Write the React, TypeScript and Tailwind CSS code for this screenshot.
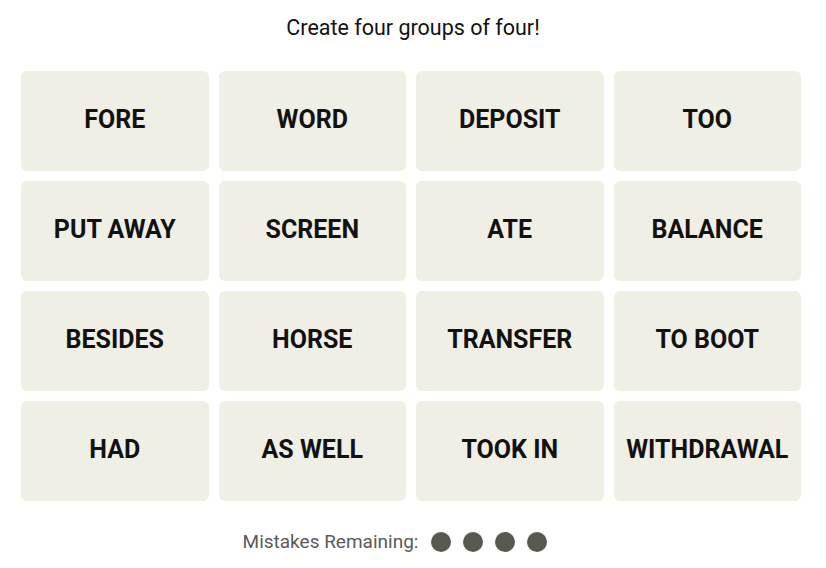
const words = [
  'FORE', 'WORD', 'DEPOSIT', 'TOO',
  'PUT AWAY', 'SCREEN', 'ATE', 'BALANCE',
  'BESIDES', 'HORSE', 'TRANSFER', 'TO BOOT',
  'HAD', 'AS WELL', 'TOOK IN', 'WITHDRAWAL',
];

export default function App() {
  return (
    <div className="w-[826px] h-[568px] bg-white font-['Roboto',sans-serif] text-[#121212]">
      <div className="pt-[15px] h-[71px] text-center text-[21.5px] leading-[26px]">
        Create four groups of four!
      </div>
      <div className="mx-[21px] w-[780px] grid grid-cols-4 gap-[10px]">
        {words.map((w) => (
          <div
            key={w}
            className="h-[100px] pb-[3px] rounded-[6px] bg-[#efefe6] flex items-center justify-center text-[25px] font-bold uppercase"
          >
            {w}
          </div>
        ))}
      </div>
      <div className="mt-[27px] pr-[36px] flex items-center justify-center gap-[13px]">
        <span className="text-[19px] text-[#5a5a5a]">Mistakes Remaining:</span>
        <div className="flex gap-[12px]">
          {[0, 1, 2, 3].map((i) => (
            <span key={i} className="w-[20px] h-[20px] rounded-full bg-[#5a594e]" />
          ))}
        </div>
      </div>
    </div>
  );
}
